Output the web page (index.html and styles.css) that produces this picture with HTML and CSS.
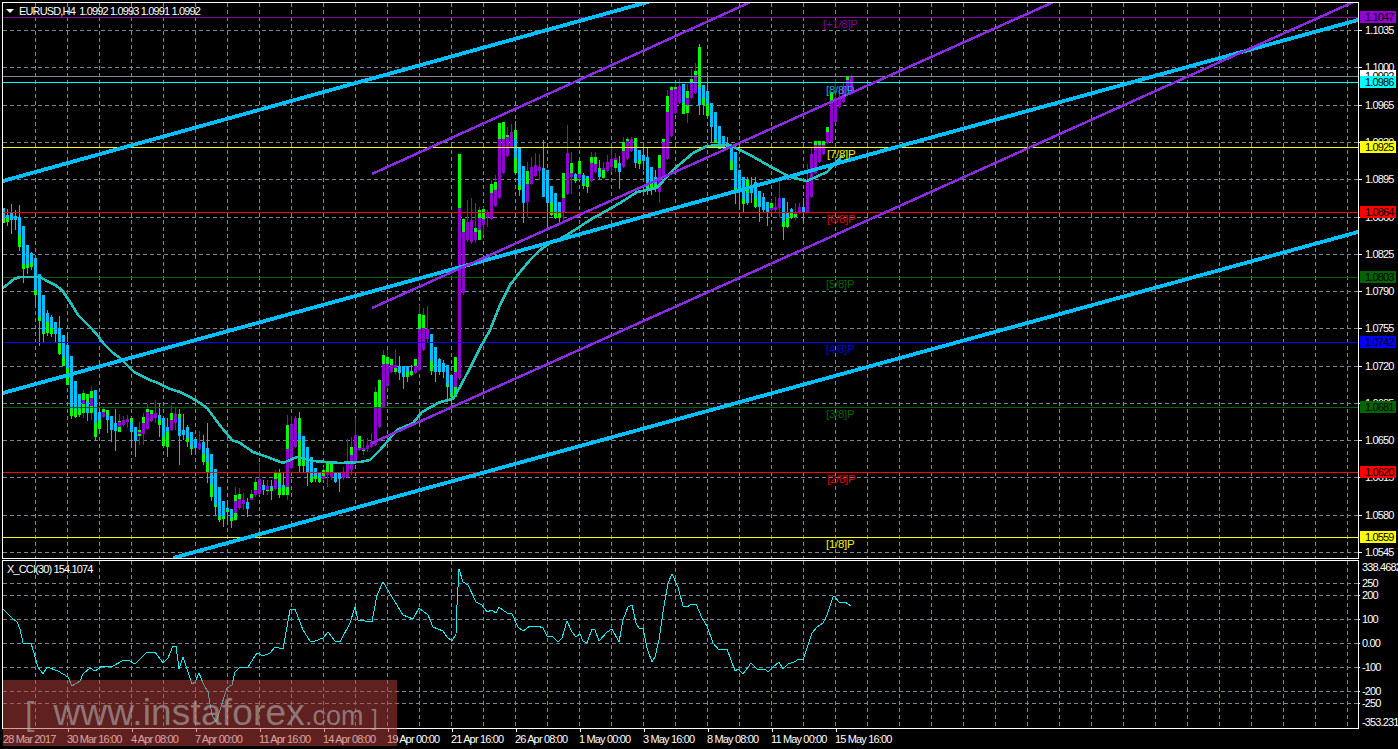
FILE: index.html
```html
<!DOCTYPE html>
<html lang="en">
<head>
<meta charset="utf-8">
<title>EURUSD,H4</title>
<link rel="stylesheet" href="styles.css">
</head>
<body>
<div class="terminal">
  <div class="row row-main">
    <div class="pane pane-main">
      <svg class="plot" id="mainPlot" width="1355" height="555" viewBox="3 3 1355 555">
        <g id="mainGrid" class="grid"></g>
        <g id="candles"></g>
        <g class="levels">
          <path class="lv-purple" d="M3 17.5H1358"/>
          <path class="lv-gray" d="M3 76.5H1358"/>
          <path class="lv-cyan" d="M3 82.5H1358"/>
          <path class="lv-yellow" d="M3 147.5H1358"/>
          <path class="lv-red" d="M3 212.5H1358"/>
          <path class="lv-green" d="M3 277.5H1358"/>
          <path class="lv-blue" d="M3 342.5H1358"/>
          <path class="lv-green" d="M3 407.5H1358"/>
          <path class="lv-red" d="M3 472.5H1358"/>
          <path class="lv-yellow" d="M3 537.5H1358"/>
        </g>
        <polyline id="maLine" class="ma"></polyline>
        <g class="channel">
          <path d="M3 181L655 0"/>
          <path d="M3 393L1358 20"/>
          <path d="M173 558L1358 232"/>
        </g>
        <g class="fork">
          <path d="M372 174L755 0"/>
          <path d="M372 308L1058 0"/>
          <path d="M372 443L1358 0"/>
        </g>
      </svg>
      <div class="legend legend-main"><i class="tri"></i><span>EURUSD,H4&nbsp; 1.0992 1.0993 1.0991 1.0992</span></div>
      <span class="mm c-purple" style="--y:24;--x:823">[+1/8]P</span>
      <span class="mm c-sky" style="--y:90;--x:826">[8/8]P</span>
      <span class="mm c-yellow" style="--y:154;--x:827">[7/8]P</span>
      <span class="mm c-red" style="--y:219;--x:827">[6/8]P</span>
      <span class="mm c-green" style="--y:284;--x:826">[5/8]P</span>
      <span class="mm c-blue" style="--y:349;--x:826">[4/8]P</span>
      <span class="mm c-green" style="--y:414;--x:826">[3/8]P</span>
      <span class="mm c-red" style="--y:479;--x:827">[2/8]P</span>
      <span class="mm c-yellow" style="--y:544;--x:826">[1/8]P</span>
    </div>
    <div class="axis">
      <span class="tick" style="--y:30">1.1035</span>
      <span class="tick" style="--y:67">1.1000</span>
      <span class="tick" style="--y:105">1.0965</span>
      <span class="tick" style="--y:142">1.0930</span>
      <span class="tick" style="--y:179">1.0895</span>
      <span class="tick" style="--y:217">1.0860</span>
      <span class="tick" style="--y:254">1.0825</span>
      <span class="tick" style="--y:291">1.0790</span>
      <span class="tick" style="--y:328">1.0755</span>
      <span class="tick" style="--y:366">1.0720</span>
      <span class="tick" style="--y:403">1.0685</span>
      <span class="tick" style="--y:440">1.0650</span>
      <span class="tick" style="--y:477">1.0615</span>
      <span class="tick" style="--y:515">1.0580</span>
      <span class="tick" style="--y:552">1.0545</span>
      <span class="badge b-purple" style="--y:17">1.1047</span>
      <span class="badge b-white" style="--y:76">1.0992</span>
      <span class="badge b-cyan" style="--y:82">1.0986</span>
      <span class="badge b-yellow" style="--y:147">1.0925</span>
      <span class="badge b-red" style="--y:212">1.0864</span>
      <span class="badge b-green" style="--y:277">1.0803</span>
      <span class="badge b-blue" style="--y:342">1.0742</span>
      <span class="badge b-green" style="--y:407">1.0681</span>
      <span class="badge b-red" style="--y:472">1.0620</span>
      <span class="badge b-yellow" style="--y:537">1.0559</span>
    </div>
  </div>
  <div class="row row-cci">
    <div class="pane pane-cci">
      <svg class="plot" id="cciPlot" width="1355" height="167" viewBox="3 561 1355 167">
        <g id="cciGrid" class="grid"></g>
        <polyline id="cciLine" class="cci"></polyline>
      </svg>
      <div class="legend legend-cci">X_CCI(30) 154.1074</div>
    </div>
    <div class="axis axis-cci">
      <span class="tick tick-clean" style="--y:567">338.4682</span>
      <span class="tick tick-cci" style="--y:583">250</span>
      <span class="tick tick-cci" style="--y:595">200</span>
      <span class="tick tick-cci" style="--y:619">100</span>
      <span class="tick tick-cci" style="--y:643">0.00</span>
      <span class="tick tick-cci" style="--y:667">-100</span>
      <span class="tick tick-cci" style="--y:691">-200</span>
      <span class="tick tick-cci" style="--y:703">-250</span>
      <span class="tick tick-clean" style="--y:722">-353.231</span>
    </div>
  </div>
  <div class="timeline">
    <span class="time time-first">28 Mar 2017</span>
    <span class="time">30 Mar 16:00</span>
    <span class="time">4 Apr 08:00</span>
    <span class="time">7 Apr 00:00</span>
    <span class="time">11 Apr 16:00</span>
    <span class="time">14 Apr 08:00</span>
    <span class="time">19 Apr 00:00</span>
    <span class="time">21 Apr 16:00</span>
    <span class="time">26 Apr 08:00</span>
    <span class="time">1 May 00:00</span>
    <span class="time">3 May 16:00</span>
    <span class="time">8 May 08:00</span>
    <span class="time">11 May 00:00</span>
    <span class="time">15 May 16:00</span>
  </div>
  <div class="watermark">
    <span class="wm-open">[</span>
    <span class="wm-host">www.instaforex</span><span class="wm-tld">.com</span>
    <span class="wm-close">]</span>
  </div>
</div>
<script src="chart.js"></script>
</body>
</html>
```
FILE: styles.css
```css
* { box-sizing: border-box; }
html, body { margin: 0; padding: 0; background: #000; }
.terminal {
  position: relative;
  width: 1398px;
  height: 749px;
  overflow: hidden;
  background: #000;
  color: #fff;
  padding: 2px 0 0 2px;
  font-family: "Liberation Sans", Arial, sans-serif;
  font-size: 11px;
  letter-spacing: -0.85px;
}
.row { display: flex; }
.row-main { height: 557px; }
.row-cci { height: 169px; margin-top: 1px; }
.pane {
  position: relative;
  width: 1357px;
  height: 100%;
  border: 1px solid #fff;
  flex: none;
}
.plot { display: block; shape-rendering: crispEdges; }
.grid path { fill: none; stroke: #778899; stroke-width: 1; stroke-dasharray: 4 3; }
.levels path { fill: none; stroke-width: 1; }
.lv-purple { stroke: #8a00a8; }
.lv-gray { stroke: #778899; }
.lv-cyan { stroke: #00ffff; }
.lv-yellow { stroke: #ffff00; }
.lv-red { stroke: #ff0000; }
.lv-green { stroke: #006400; }
.lv-blue { stroke: #0000ff; }
.ma { fill: none; stroke: #20c4bc; stroke-width: 2.6; }
.channel path { fill: none; stroke: #00bfff; stroke-width: 3.8; }
.fork path { fill: none; stroke: #8a2be2; stroke-width: 2.5; }
.cci { fill: none; stroke: #12f0f4; stroke-width: 1; }

.legend { position: absolute; display: flex; align-items: center; line-height: 12px; white-space: pre; }
.legend-main { left: 3px; top: 2px; gap: 5px; }
.legend-cci { left: 4px; top: 2px; }
.tri {
  display: block;
  width: 0;
  height: 0;
  border-left: 4px solid transparent;
  border-right: 4px solid transparent;
  border-top: 4px solid #fff;
}
.mm {
  position: absolute;
  left: calc((var(--x) - 3) * 1px);
  top: calc((var(--y) - 10) * 1px);
  font-size: 11.5px;
  line-height: 14px;
  letter-spacing: -0.3px;
  white-space: nowrap;
}
.c-purple { color: #8000a0; }
.c-sky { color: #00aee0; }
.c-yellow { color: #f0f000; }
.c-red { color: #e00000; }
.c-green { color: #006400; }
.c-blue { color: #0000e0; }

.axis { position: relative; flex: 1; }
.tick {
  position: absolute;
  left: 0;
  top: calc((var(--y) - 8) * 1px);
  padding-left: 6px;
  line-height: 12px;
  height: 12px;
  white-space: nowrap;
}
.tick::before {
  content: "";
  position: absolute;
  left: 0;
  top: 6px;
  width: 3px;
  height: 1px;
  background: #fff;
}
.axis-cci .tick { top: calc((var(--y) - 566) * 1px); }
.tick-clean::before { display: none; }
.tick-clean { padding-left: 3px; }
.tick-cci { padding-left: 3px; }
.tick-cci::before { width: 1px; }
.badge {
  position: absolute;
  left: 1px;
  top: calc((var(--y) - 8) * 1px);
  width: 36px;
  height: 12px;
  padding-left: 5px;
  line-height: 12px;
  color: #000;
}
.b-purple { background: #9400d3; }
.b-white { background: #fff; }
.b-cyan { background: #00ffff; }
.b-yellow { background: #ffff00; }
.b-red { background: #ff0000; }
.b-green { background: #006400; }
.b-blue { background: #0000ff; }

.timeline { display: flex; padding-left: 1px; height: 20px; }
.time {
  position: relative;
  flex: none;
  width: 64px;
  padding-top: 4px;
  line-height: 12px;
  white-space: nowrap;
}
.time::before {
  content: "";
  position: absolute;
  left: 1px;
  top: 0;
  width: 1px;
  height: 3px;
  background: #fff;
}
.time-first::before { display: none; }

.watermark {
  position: absolute;
  left: 3px;
  top: 680px;
  width: 394px;
  height: 66px;
  padding-left: 22px;
  display: flex;
  align-items: baseline;
  background: rgba(190, 64, 64, 0.5);
  color: rgba(176, 176, 176, 0.62);
  letter-spacing: 0;
  line-height: 66px;
  white-space: pre;
  font-weight: 400;
}
.wm-open { font-size: 34px; margin-right: 19px; }
.wm-host { font-size: 37px; letter-spacing: 0.2px; }
.wm-tld { font-size: 27px; }
.wm-close { font-size: 22px; margin-left: 8px; }
```
FILE: chart.js
```javascript
var NS = "http://www.w3.org/2000/svg";

function gridPath(host, ys, top, bottom) {
  var d = "";
  ys.forEach(function (y) { d += "M3 " + (y + 0.5) + "H1358"; });
  for (var x = 35; x < 1358; x += 32) { d += "M" + (x + 0.5) + " " + top + "V" + bottom; }
  var p = document.createElementNS(NS, "path");
  p.setAttribute("d", d);
  host.appendChild(p);
}

gridPath(document.getElementById("mainGrid"),
  [30, 67, 105, 142, 179, 217, 254, 291, 328, 366, 403, 440, 477, 515, 552], 3, 558);
gridPath(document.getElementById("cciGrid"),
  [583, 595, 619, 643, 667, 691, 703], 561, 728);

var bars = `b 208 218 208 223 218 223
b 215 218 209 226 215 222
b 213 220 204 234
b 216 220 210 230
b 217 247 205 251 235 247
b 226 269 226 283 264 269
b 245 268 245 274 265 268
b 253 267 252 270 263 267
b 258 295 258 306 290 295
b 274 321 274 346 317 321
b 295 334 295 343 332 334
b 313 333 310 336 322 333
b 317 334 315 337 328 334
b 322 334 322 343
b 328 354 316 355 343 354
b 335 366 335 366 357 366
b 345 385 332 385 368 385
b 356 416 356 419 408 416
b 381 417 381 418 409 417
b 394 415 394 417 409 415
p 400 404 390 418 393 413
b 402 413 394 421 394 413
p 398 406 386 420 391 413
b 390 437 390 440 423 437
b 412 429 408 433 420 429
p 412 417 408 418 409 417
b 410 420 410 433 410 415
b 416 430 416 442
b 423 431 409 451
p 422 427 414 432 421 432
p 420 425 416 427
p 419 422 415 428 419 422
b 422 432 418 448 418 422
b 427 441 427 457
p 432 434 422 445 430 436
p 423 434 413 445 417 423
p 412 429 404 430 409 429
p 414 421 410 422 410 421
p 413 418 400 423
b 415 425 403 437 420 425
b 418 446 418 447 437 446
b 427 447 418 457 432 447
p 415 430 405 431 413 420
p 414 423 408 430
b 414 436 409 465 414 418
b 430 435 414 440 430 435
b 427 442 425 447 438 442
b 432 449 432 455 447 449
b 439 448 439 453
p 443 449 431 450 443 449
b 442 462 435 465 454 462
b 448 473 423 483 462 473
b 454 497 454 501 485 497
b 469 507 469 515 505 507
b 487 520 487 522 517 520
b 501 519 501 527 516 519
b 508 512 500 522 510 512
b 509 521 509 528 518 521
p 501 513 487 521 495 520
p 499 508 488 510 494 508
p 500 504 493 510
b 502 509 498 517
p 498 500 490 500 494 500
p 482 495 477 497 482 490
p 479 494 463 495
b 485 490 480 495
p 486 491 480 495 490 491
b 486 491 480 500 488 491
p 479 489 470 490 473 479
b 483 488 469 498 473 495
b 485 487 472 495 487 495
p 449 487 415 500 425 495
p 424 468 416 469
p 418 447 416 448
b 433 440 412 472 418 466
b 436 466 436 472 460 466
b 447 472 447 486
b 457 482 457 483 477 482
b 468 479 468 482 476 479
b 472 482 472 483 478 482
p 470 479 467 480 470 476
p 472 475 462 487 463 475
p 472 477 462 480 463 472
b 473 482 473 483
b 473 479 473 492
p 473 478 467 480
p 462 477 439 478
p 455 470 437 475 447 455
p 435 462 418 463
p 448 450 436 451 436 450
p 448 450 439 455 448 451
p 445 449 438 452
p 442 447 433 448
p 408 445 387 446 392 408
p 407 427 379 428 380 407
p 364 407 350 408 355 364
p 357 386 350 387 357 364
p 365 372 359 373 359 365
p 365 370 349 374 368 372
b 366 373 356 380
b 366 377 366 389
b 366 372 366 382 372 377
b 371 372 365 376 372 375
p 366 373 359 374 359 366
p 329 370 305 371 314 329
p 328 350 308 351 315 328
p 329 339 306 343
b 334 371 334 375 361 371
b 347 372 347 382
b 359 372 358 375
b 363 372 360 378
b 365 387 365 400 385 387
b 375 397 375 405 393 397
p 372 387 360 397 357 397
p 208 378 154 380 154 208
p 232 293 218 295 219 232
p 222 240 200 242
p 220 242 198 244
p 232 240 203 243 228 240
p 218 230 207 240 210 240
p 219 225 207 235 209 225
p 213 217 210 227 213 217
p 193 219 180 220 184 193
p 190 206 175 207 182 190
p 139 198 123 199 123 139
p 139 173 122 174 122 139
p 137 156 127 157 135 137
p 132 147 124 148
b 139 158 121 174 130 173
b 147 190 147 196 185 190
b 166 203 166 223
p 184 202 162 217 171 184
p 167 184 157 185
p 165 176 153 177
p 167 171 154 180
b 168 197 140 197
b 170 203 170 227
b 186 215 186 216 203 215
b 193 218 193 219 212 218
b 202 218 202 225 212 218
p 198 213 173 222 173 198
p 153 194 125 195
p 173 177 152 194 163 177
b 174 181 173 183 178 181
p 174 178 161 179 161 174
b 175 186 173 189 184 186
b 176 187 176 193 178 187
p 163 181 152 182 157 163
p 164 172 152 173 157 164
b 168 177 160 179 168 171
p 168 170 162 179 168 178
p 162 171 155 172
p 159 167 147 172
p 158 160 153 172 158 168
b 163 172 156 189
p 151 167 137 168 142 151
p 141 159 137 160 139 141
p 139 151 137 152
b 138 163 138 168 138 147
b 150 164 150 169 160 164
b 155 161 147 170
b 157 191 147 195 187 191
b 167 189 167 195 183 189
b 177 188 170 192 184 188
p 168 192 155 203 155 168
p 142 176 139 177 139 142
p 96 159 90 160 96 112
p 90 136 86 137 87 90
p 89 113 82 114 87 89
p 86 103 79 104
b 84 114 84 114 103 114
p 98 105 84 123 91 113
p 83 98 69 99 79 83
p 75 93 63 94 71 75
b 87 105 44 115 47 87
b 85 105 85 115 98 105
b 91 116 72 117 104 116
b 103 127 103 143
b 112 142 112 143 140 143
b 126 147 126 149 145 149
b 136 145 136 149
b 143 147 137 150
b 145 170 145 170 161 170
b 152 190 152 204 188 193
b 170 192 170 208
b 177 204 177 213 199 204
b 180 203 177 205 180 193
b 185 193 177 203
b 182 207 177 208 198 207
b 191 207 191 222
b 197 210 193 213
b 202 213 202 226
p 205 210 200 213 203 208
p 207 210 197 212
p 198 208 178 217
b 198 227 198 240 222 227
b 212 227 202 228 218 227
b 209 218 208 219 212 218
p 213 214 203 220 213 217
p 207 213 203 214
b 207 212 198 223
p 182 212 164 213
p 154 197 148 198
p 145 173 141 174 141 145
p 142 162 141 163 141 145
p 145 154 141 155 141 145
p 132 143 127 144 127 132
p 103 142 92 143 92 103
p 98 122 79 123
p 97 107 90 108
p 87 102 82 103
p 80 90 76 91 76 80
p 76 92 75 93`;

var COLORS = { b: "#00bfff", p: "#9400d3" };
var host = document.getElementById("candles");

function rect(x, y, w, h, fill) {
  if (h <= 0) return;
  var r = document.createElementNS(NS, "rect");
  r.setAttribute("x", x);
  r.setAttribute("y", y);
  r.setAttribute("width", w);
  r.setAttribute("height", h);
  r.setAttribute("fill", fill);
  host.appendChild(r);
}

bars.split("\n").forEach(function (line, k) {
  var f = line.trim().split(" ");
  var color = COLORS[f[0]];
  var top = +f[1], bot = +f[2], wt = +f[3], wb = +f[4];
  var x = 2 + 4 * k;
  rect(x + 1, wt, 1, wb - wt, color);
  if (f.length > 5) {
    var gt = +f[5], gb = +f[6];
    if (gb >= bot && gt > top && gt < bot) bot = gt;
    else if (gt <= top && gb < bot && gb > top) top = gb;
    rect(x, gt, 3, gb - gt, "#00ff00");
  }
  rect(x, top, 3, bot - top, color);
});

document.getElementById("maLine").setAttribute("points",
  "3,288 8,284 14,279 20,277 40,277 47,281 55,285 62,290 66,296 72,305 78,315 85,322 92,329 98,336 104,344 112,352 120,358 128,366 134,372 142,376 150,380 158,383 170,389 180,392 190,397 200,403 207,408 213,416 222,428 232,440 240,443 253,452 270,458 283,463 297,457 313,461 340,463 360,462 370,460 380,450 397,430 413,423 422,412 440,402 453,399 460,387 470,368 480,348 490,330 500,305 510,285 520,272 530,260 540,250 550,243 558,240 570,233 590,220 620,203 637,192 657,188 673,170 693,153 707,146 730,145 750,155 773,168 790,177 807,181 827,172 843,155");

document.getElementById("cciLine").setAttribute("points",
  "3,609 12,618 17,622 20,629 23,643 31,643 38,667 43,674 47,667 58,671 68,677 72,686 80,681 83,674 90,668 95,671 102,666 113,666 122,661 128,660 135,664 147,652 155,652 163,663 168,658 173,646 176,646 179,669 183,657 192,684 195,682 199,673 203,683 208,692 212,715 216,722 220,710 227,688 232,685 235,672 240,667 248,667 257,653 263,656 270,653 275,647 283,649 290,610 295,609 303,630 310,641 315,641 323,638 328,632 335,641 340,642 350,623 355,607 358,620 372,622 377,595 383,582 392,597 403,615 413,619 419,608 428,615 433,627 443,631 447,637 452,641 456,634 457,605 459,569 463,582 468,585 476,602 482,605 487,612 492,610 496,613 499,607 507,613 512,614 518,627 523,631 530,626 538,626 543,628 547,636 552,636 558,642 562,638 567,621 572,632 576,637 580,634 583,641 587,643 592,629 595,630 599,641 607,632 612,629 619,642 623,620 628,607 632,605 636,623 639,628 643,628 647,648 652,662 655,657 659,640 663,612 668,583 672,574 678,587 683,606 687,607 692,604 696,604 702,618 707,626 713,643 719,650 727,649 735,671 738,669 743,674 751,663 758,670 765,669 768,672 773,667 779,662 783,669 788,664 794,662 799,659 803,660 812,633 817,627 823,623 827,615 833,597 834,596 839,602 845,602 851,606");
```
